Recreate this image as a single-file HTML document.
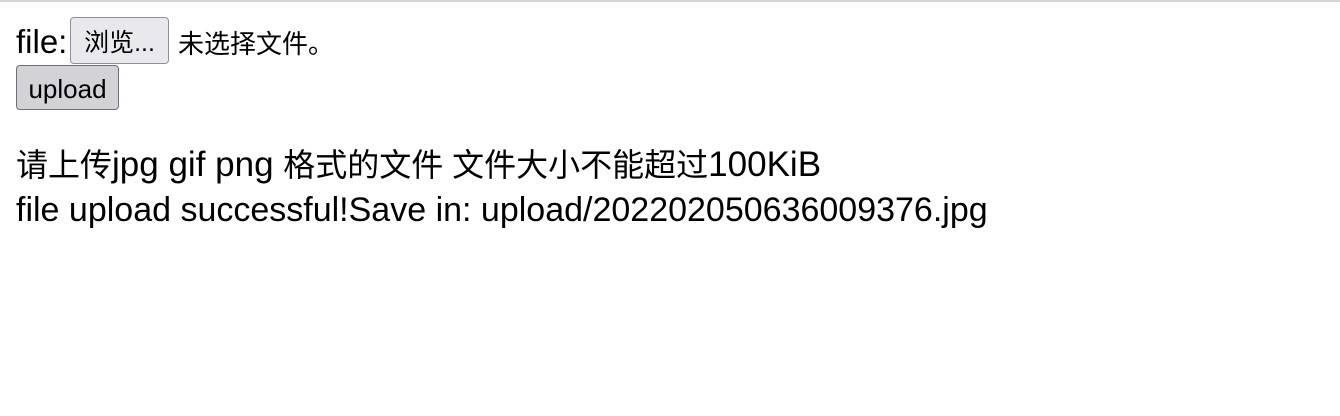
<!DOCTYPE html>
<html><head><meta charset="utf-8"><style>
html,body{margin:0;padding:0;background:#fff;}
body{width:1340px;height:416px;overflow:hidden;border-top:2px solid #d4d4d4;box-sizing:border-box;font-family:"Liberation Sans","Noto Sans CJK SC",sans-serif;color:#000;position:relative;}
.a{position:absolute;white-space:nowrap;}
.btn{position:absolute;box-sizing:border-box;border:1.5px solid #8f8f9d;border-radius:4px;background:#e9e9ed;font-size:26px;text-align:center;}
</style></head><body>
<div class="a" style="left:16px;top:20px;font-size:33px;line-height:40px;">file:</div>
<div class="btn" style="left:70px;top:15px;width:99px;height:47px;line-height:50px;font-size:25px;">浏览...</div>
<div class="a" style="left:178px;top:22px;font-size:26px;line-height:40px;">未选择文件。</div>
<div class="btn" style="left:16px;top:63px;width:103px;height:45px;line-height:46px;background:#d2d2d7;border-color:#6e6e78;">upload</div>
<div class="a" style="left:16px;top:140px;font-size:34px;line-height:45px;"><span style="font-size:32px">请上传</span><span style="font-size:35px">jpg gif png </span><span style="font-size:32px">格式的文件 文件大小不能超过</span><span style="font-size:35px">100KiB</span><br>file upload successful!Save in: upload/202202050636009376.jpg</div>
</body></html>
